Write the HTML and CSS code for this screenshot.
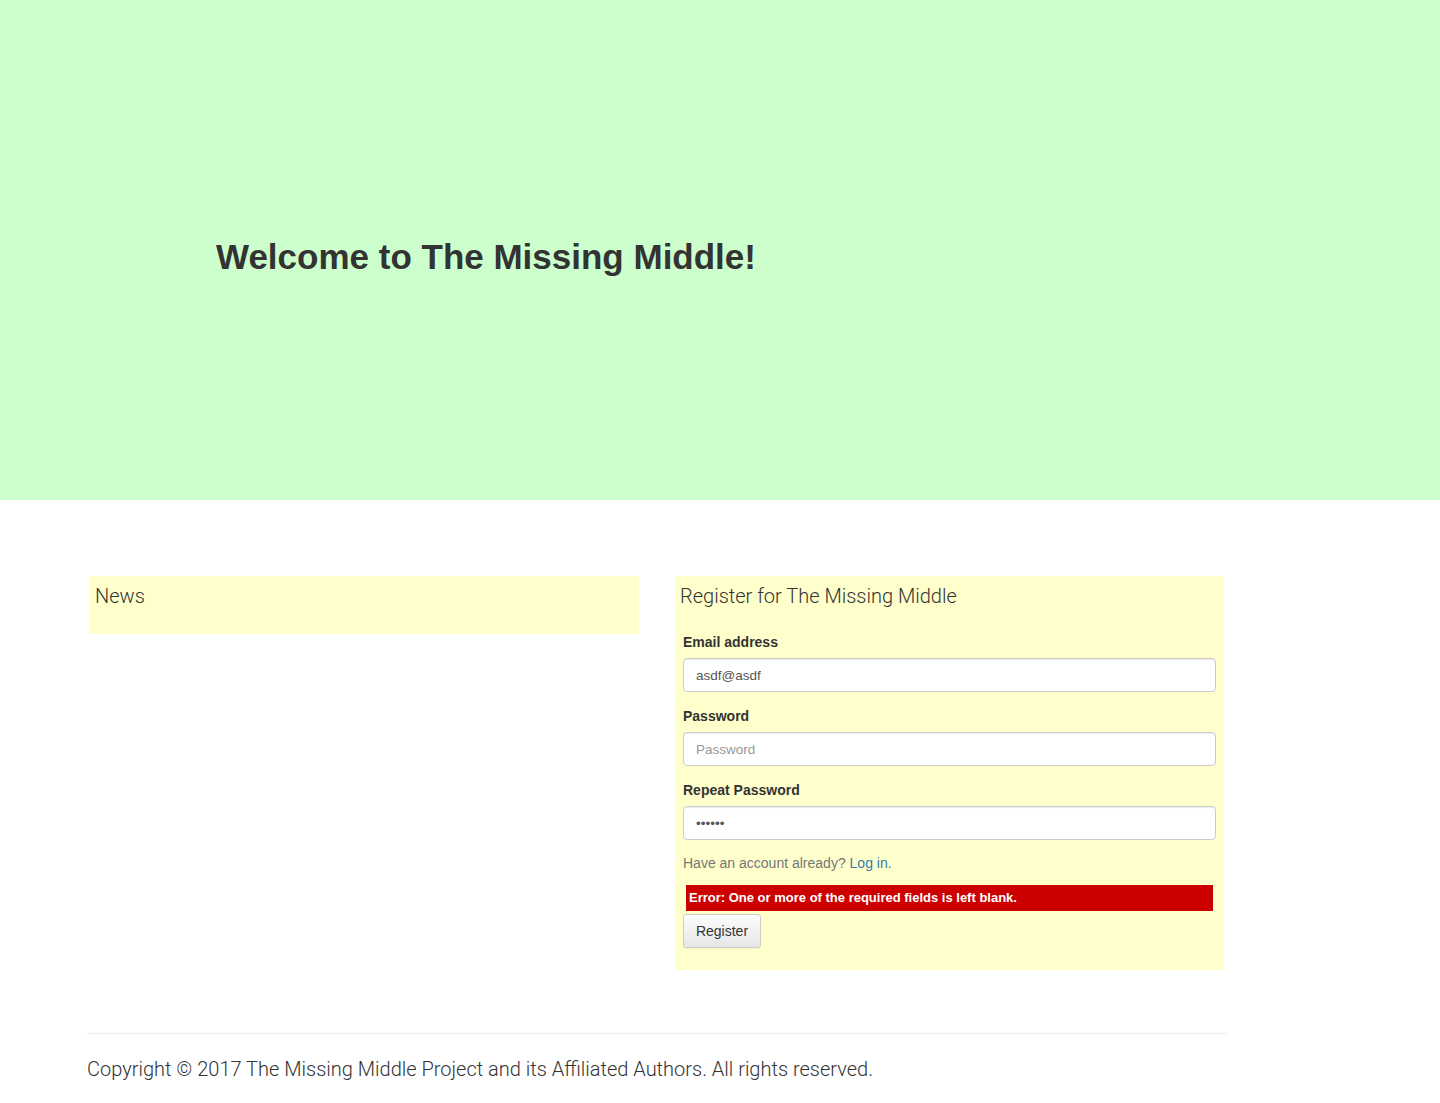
FILE: index.html
```html
<!DOCTYPE html>
<html>
<head>
<meta charset="utf-8">
<title>The Missing Middle</title>
<link rel="stylesheet" href="styles.css">
</head>
<body>
<div class="jumbotron">
  <h1 class="welcome">Welcome to The Missing Middle!</h1>
</div>
<div class="main">
  <div class="panels">
    <section class="panel news">
      <h3 class="panel-title">News</h3>
    </section>
    <section class="panel register">
      <h3 class="panel-title">Register for The Missing Middle</h3>
      <form class="form">
        <div class="group">
          <label class="label">Email address</label>
          <input class="input" type="text" value="asdf@asdf">
        </div>
        <div class="group">
          <label class="label">Password</label>
          <input class="input" type="password" placeholder="Password">
        </div>
        <div class="group">
          <label class="label">Repeat Password</label>
          <input class="input" type="password" value="123456">
        </div>
        <p class="login-note">Have an account already? <a class="link" href="#">Log in</a>.</p>
        <div class="error">Error: One or more of the required fields is left blank.</div>
        <button class="btn" type="button">Register</button>
      </form>
    </section>
  </div>
  <footer class="footer">
    <p class="copyright">Copyright © 2017 The Missing Middle Project and its Affiliated Authors. All rights reserved.</p>
  </footer>
</div>
</body>
</html>
```
FILE: styles.css
```css
html, body {
  margin: 0;
  padding: 0;
  background: #fff;
  font-family: "Liberation Sans", Arial, sans-serif;
  color: #333;
}
.jumbotron {
  background: #ccffcc;
  height: 500px;
  box-sizing: border-box;
  padding-top: 234px;
  padding-left: 216px;
}
.welcome {
  margin: 0;
  font-size: 35px;
  font-weight: bold;
  line-height: 46px;
  color: #333;
}
.main {
  margin-left: 87px;
  width: 1140px;
  padding-top: 76px;
}
.panels {
  display: flex;
  align-items: flex-start;
  gap: 36px;
  margin-left: 3px;
}
.panel {
  width: 549px;
  background: #ffffcc;
  box-sizing: border-box;
}
.news {
  height: 58px;
  padding: 5px 5px 0;
}
.panel-title {
  margin: 0;
  font-family: Roboto, "Liberation Sans", sans-serif;
  font-weight: 300;
  font-size: 20px;
  line-height: 30px;
  color: #333;
}
.register {
  padding: 5px 8px 22px 5px;
}
.form {
  margin-left: 3px;
  padding-top: 21px;
}
.group + .group {
  margin-top: 14px;
}
.label {
  display: block;
  font-size: 14px;
  font-weight: bold;
  line-height: 20px;
  margin-bottom: 6px;
  color: #333;
}
.input {
  display: block;
  width: 100%;
  height: 34px;
  box-sizing: border-box;
  padding: 6px 12px;
  border: 1px solid #ccc;
  border-radius: 4px;
  box-shadow: inset 0 1px 1px rgba(0,0,0,0.075);
  font-family: "Liberation Sans", Arial, sans-serif;
  font-size: 13.5px;
  color: #555;
  background: #fff;
}
.input::placeholder {
  color: #999;
}
.login-note {
  margin: 13px 0 12px;
  font-size: 14px;
  line-height: 20px;
  color: #777;
}
.link {
  color: #337ab7;
  text-decoration: none;
}
.error {
  margin: 0 3px;
  background: #cc0000;
  color: #fff;
  font-size: 13px;
  font-weight: bold;
  line-height: 26px;
  height: 26px;
  padding-left: 3px;
}
.btn {
  display: block;
  margin-top: 3px;
  height: 34px;
  width: 78px;
  padding: 0;
  border: 1px solid #ccc;
  border-radius: 3px;
  background: linear-gradient(#fdfdfd, #e6e6e6);
  font-family: "Liberation Sans", Arial, sans-serif;
  font-size: 14px;
  color: #333;
  box-shadow: 0 1px 1px rgba(0,0,0,0.05);
}
.footer {
  margin-top: 63px;
  border-top: 1px solid #eee;
}
.copyright {
  margin: 22px 0 0;
  font-family: Roboto, "Liberation Sans", sans-serif;
  font-weight: 300;
  font-size: 20px;
  line-height: 26px;
  color: #333;
}
```
